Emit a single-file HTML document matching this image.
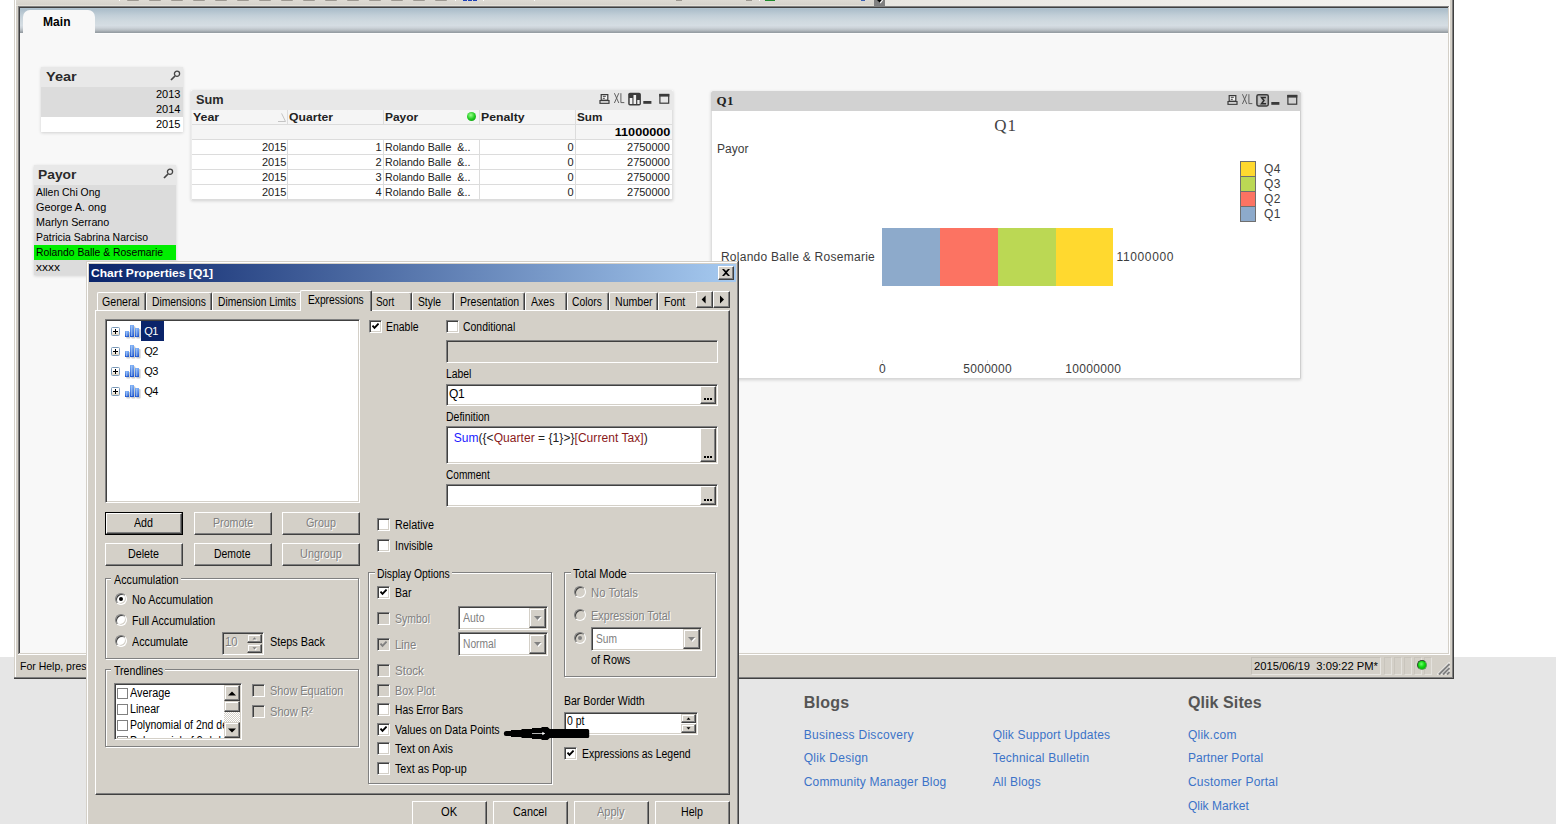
<!DOCTYPE html><html><head><meta charset="utf-8"><title>QlikView</title><style>html,body{margin:0;padding:0}
body{width:1556px;height:824px;overflow:hidden;position:relative;background:#e6e6e6;font-family:"Liberation Sans",sans-serif;font-size:11px}
div,span.t,svg{position:absolute;box-sizing:border-box}
span.t{white-space:pre;display:block}
.sunk{border:1px solid;border-color:#808080 #fff #fff #808080;box-shadow:inset 1px 1px 0 #404040,inset -1px -1px 0 #d4d0c8;background:#fff}
.btn{border:1px solid;border-color:#fff #404040 #404040 #fff;box-shadow:inset -1px -1px 0 #808080,inset 1px 1px 0 #d4d0c8;background:#d4d0c8}
.grp{border:1px solid #808080;box-shadow:1px 1px 0 #fff,inset 1px 1px 0 #fff}
.rad{border-radius:50%;border:1px solid;border-color:#808080 #fff #fff #808080;box-shadow:inset 1px 1px 0 #404040,inset -1px -1px 0 #d4d0c8;background:#fff;transform:rotate(0deg)}
.tab{border-left:1px solid #fff;border-top:1px solid #fff;border-right:1px solid #404040;border-radius:2px 2px 0 0;box-shadow:inset -1px 0 0 #808080;background:#d4d0c8}
.sh{box-shadow:0 1px 3px rgba(0,0,0,.16)}
.sbtn{border:1px solid;border-color:#d4d0c8 #404040 #404040 #d4d0c8;box-shadow:inset -1px -1px 0 #808080,inset 1px 1px 0 #fff;background:#d4d0c8}
</style></head><body><div style="left:0px;top:0px;width:1556px;height:657px;background:#fff"></div><span class="t" style="top:693px;font-size:16px;line-height:20px;color:#555;font-weight:bold;left:803.70px;letter-spacing:0.24px;">Blogs</span><span class="t" style="top:693px;font-size:16px;line-height:20px;color:#555;font-weight:bold;left:1187.90px;letter-spacing:0.10px;">Qlik Sites</span><span class="t" style="top:727px;font-size:12px;line-height:16px;color:#3b73c8;left:803.70px;letter-spacing:0.30px;">Business Discovery</span><span class="t" style="top:750px;font-size:12px;line-height:16px;color:#3b73c8;left:803.70px;letter-spacing:0.30px;">Qlik Design</span><span class="t" style="top:774px;font-size:12px;line-height:16px;color:#3b73c8;left:803.70px;letter-spacing:0.18px;">Community Manager Blog</span><span class="t" style="top:727px;font-size:12px;line-height:16px;color:#3b73c8;left:992.70px;letter-spacing:0.17px;">Qlik Support Updates</span><span class="t" style="top:750px;font-size:12px;line-height:16px;color:#3b73c8;left:992.70px;letter-spacing:0.22px;">Technical Bulletin</span><span class="t" style="top:774px;font-size:12px;line-height:16px;color:#3b73c8;left:992.70px;letter-spacing:0.16px;">All Blogs</span><span class="t" style="top:727px;font-size:12px;line-height:16px;color:#3b73c8;left:1187.90px;letter-spacing:0.26px;">Qlik.com</span><span class="t" style="top:750px;font-size:12px;line-height:16px;color:#3b73c8;left:1187.90px;letter-spacing:0.09px;">Partner Portal</span><span class="t" style="top:774px;font-size:12px;line-height:16px;color:#3b73c8;left:1187.90px;letter-spacing:0.24px;">Customer Portal</span><span class="t" style="top:798px;font-size:12px;line-height:16px;color:#3b73c8;left:1187.90px;letter-spacing:0.02px;">Qlik Market</span><div style="left:14px;top:0px;width:1440px;height:679px;background:#d4d0c8"></div><div style="left:15px;top:0px;width:1px;height:677px;background:#fff"></div><div style="left:1452px;top:0px;width:1px;height:678px;background:#808080"></div><div style="left:1453px;top:0px;width:1px;height:679px;background:#404040"></div><div style="left:14px;top:677px;width:1439px;height:1px;background:#808080"></div><div style="left:14px;top:678px;width:1440px;height:1px;background:#404040"></div><div style="left:16px;top:0px;width:868px;height:6px;background:linear-gradient(#dddad3,#d6d3cc 80%,#e4e1d9 84%)"></div><div style="left:884px;top:0px;width:566px;height:6px;background:linear-gradient(90deg,#e8e6e1,#f4f3f0)"></div><div style="left:16px;top:0px;width:864px;height:1px;"><div style="left:111px;top:0;width:12px;height:1px;background:#9d9992;border-radius:0 0 2px 2px"></div><div style="left:133px;top:0;width:12px;height:1px;background:#9d9992;border-radius:0 0 2px 2px"></div><div style="left:155px;top:0;width:12px;height:1px;background:#9d9992;border-radius:0 0 2px 2px"></div><div style="left:177px;top:0;width:12px;height:1px;background:#9d9992;border-radius:0 0 2px 2px"></div><div style="left:199px;top:0;width:12px;height:1px;background:#9d9992;border-radius:0 0 2px 2px"></div><div style="left:221px;top:0;width:12px;height:1px;background:#9d9992;border-radius:0 0 2px 2px"></div><div style="left:243px;top:0;width:12px;height:1px;background:#9d9992;border-radius:0 0 2px 2px"></div><div style="left:265px;top:0;width:12px;height:1px;background:#9d9992;border-radius:0 0 2px 2px"></div><div style="left:287px;top:0;width:12px;height:1px;background:#9d9992;border-radius:0 0 2px 2px"></div><div style="left:309px;top:0;width:12px;height:1px;background:#9d9992;border-radius:0 0 2px 2px"></div><div style="left:331px;top:0;width:12px;height:1px;background:#9d9992;border-radius:0 0 2px 2px"></div><div style="left:353px;top:0;width:12px;height:1px;background:#9d9992;border-radius:0 0 2px 2px"></div><div style="left:375px;top:0;width:12px;height:1px;background:#9d9992;border-radius:0 0 2px 2px"></div><div style="left:397px;top:0;width:12px;height:1px;background:#9d9992;border-radius:0 0 2px 2px"></div><div style="left:419px;top:0;width:12px;height:1px;background:#9d9992;border-radius:0 0 2px 2px"></div></div><div style="left:119px;top:0px;width:1px;height:1px;background:#fff"></div><div style="left:455px;top:0px;width:1px;height:1px;background:#fff"></div><div style="left:483px;top:0px;width:1px;height:1px;background:#fff"></div><div style="left:534px;top:0px;width:1px;height:1px;background:#fff"></div><div style="left:759px;top:0px;width:1px;height:1px;background:#fff"></div><div style="left:463px;top:0px;width:4px;height:1px;background:#1c3fb4"></div><div style="left:468px;top:0px;width:4px;height:1px;background:#1c3fb4"></div><div style="left:473px;top:0px;width:4px;height:1px;background:#1c3fb4"></div><div style="left:676px;top:0px;width:6px;height:1px;background:#9d9992"></div><div style="left:746px;top:0px;width:6px;height:1px;background:#9d9992"></div><div style="left:765px;top:0px;width:10px;height:1px;background:#1f8a2b"></div><div style="left:861px;top:0px;width:4px;height:1px;background:#3b5fb0"></div><div style="left:874px;top:0px;width:11px;height:6px;background:#808080"></div><svg style="left:876px;top:0px" width="8" height="4" viewBox="0 0 8 4"><path d="M1 0h5L3.6 2.6z" fill="#000"/><path d="M6.6 0L4.2 3.2" stroke="#fff" stroke-width="1.1"/></svg><div style="left:18px;top:6px;width:1432px;height:1px;background:#808080"></div><div style="left:18px;top:7px;width:1431px;height:1px;background:#404040"></div><div style="left:18px;top:6px;width:1px;height:649px;background:#808080"></div><div style="left:19px;top:7px;width:1px;height:647px;background:#404040"></div><div style="left:1449px;top:6px;width:1px;height:649px;background:#fff"></div><div style="left:1448px;top:7px;width:1px;height:647px;background:#d4d0c8"></div><div style="left:19px;top:653px;width:1430px;height:1px;background:#d4d0c8"></div><div style="left:18px;top:654px;width:1432px;height:1px;background:#fff"></div><div style="left:20px;top:8px;width:1428px;height:25px;background:linear-gradient(#b0c3d0 0%,#adbfcb 6%,#c2cfd8 30%,#cfd9df 52%,#d5dde3 70%,#ccd3d9 79%,#b6bdc2 89%,#989fa5 97%,#959da2 100%)"></div><div style="left:23px;top:10px;width:72px;height:24px;background:#f8f8f8;border-radius:7px 7px 0 0"></div><span class="t" style="top:14px;font-size:12px;line-height:16px;color:#000;font-weight:bold;left:43.00px;letter-spacing:0.05px;">Main</span><div style="left:20px;top:33px;width:1428px;height:620px;background:#f8f8f8"></div><div style="left:95px;top:33px;width:1353px;height:1px;background:#fdfdfd"></div><span class="t" style="top:659px;font-size:11px;line-height:15px;color:#000;left:20.00px;transform-origin:0 0;transform:scaleX(0.9551);">For Help, press F1</span><div style="left:1251px;top:657px;width:130px;height:18px;border:1px solid;border-color:#c4c0b8 #e8e6e2 #e8e6e2 #c4c0b8"></div><span class="t" style="top:659px;font-size:11px;line-height:15px;color:#000;left:1253.50px;transform-origin:0 0;transform:scaleX(1.0187);">2015/06/19  3:09:22 PM*</span><div style="left:1384px;top:657px;width:8px;height:18px;border:1px solid;border-color:#c9c5bd #e4e2dd #e4e2dd #c9c5bd"></div><div style="left:1394px;top:657px;width:8px;height:18px;border:1px solid;border-color:#c9c5bd #e4e2dd #e4e2dd #c9c5bd"></div><div style="left:1404px;top:657px;width:8px;height:18px;border:1px solid;border-color:#c9c5bd #e4e2dd #e4e2dd #c9c5bd"></div><div style="left:1414px;top:657px;width:8px;height:18px;border:1px solid;border-color:#c9c5bd #e4e2dd #e4e2dd #c9c5bd"></div><div style="left:1424px;top:657px;width:8px;height:18px;border:1px solid;border-color:#c9c5bd #e4e2dd #e4e2dd #c9c5bd"></div><div style="left:1417px;top:660px;width:10px;height:10px;border-radius:50%;background:radial-gradient(circle at 42% 38%,#6dff6d 0%,#10d810 45%,#0a9a0a 100%);border:1px solid;border-color:#2a4a2a #5a9a5a #5a9a5a #2a4a2a"></div><svg style="left:1437px;top:662px" width="13" height="13" viewBox="0 0 13 13"><path d="M12.5 0.5L0.5 12.5M12.5 4.5L4.5 12.5M12.5 8.5L8.5 12.5" stroke="#fff" stroke-width="1.1"/><path d="M12.5 1.9L1.9 12.5M12.5 5.9L5.9 12.5M12.5 9.9L9.9 12.5" stroke="#808080" stroke-width="2"/></svg><div class="sh" style="left:41px;top:67px;width:142px;height:65px;background:#fff"></div><div style="left:41px;top:67px;width:142px;height:20px;background:#e8e8e8"></div><div style="left:41px;top:87px;width:142px;height:30px;background:#dcdcdc"></div><div style="left:41px;top:117px;width:142px;height:15px;background:#fff"></div><span class="t" style="top:69px;font-size:12.5px;line-height:16px;color:#2a2a2a;font-weight:bold;left:45.70px;transform-origin:0 0;transform:scaleX(1.1619);">Year</span><svg style="left:170px;top:70px" width="11" height="11" viewBox="0 0 11 11"><circle cx="7" cy="3.8" r="2.6" fill="none" stroke="#444" stroke-width="1.3"/><path d="M5 6L1 10" stroke="#444" stroke-width="1.7"/></svg><span class="t" style="top:87px;font-size:11px;line-height:15px;color:#000;text-align:right;right:1375.10px;transform-origin:100% 0;transform:scaleX(1.0006);">2013</span><span class="t" style="top:102px;font-size:11px;line-height:15px;color:#000;text-align:right;right:1375.10px;transform-origin:100% 0;transform:scaleX(1.0006);">2014</span><span class="t" style="top:117px;font-size:11px;line-height:15px;color:#000;text-align:right;right:1375.10px;transform-origin:100% 0;transform:scaleX(1.0006);">2015</span><div class="sh" style="left:34px;top:165px;width:142px;height:110px;background:#dcdcdc"></div><div style="left:34px;top:165px;width:142px;height:20px;background:#e8e8e8"></div><div style="left:34px;top:245px;width:142px;height:15px;background:#00ee00"></div><span class="t" style="top:167px;font-size:12.5px;line-height:16px;color:#2a2a2a;font-weight:bold;left:38.10px;transform-origin:0 0;transform:scaleX(1.1050);">Payor</span><svg style="left:163px;top:168px" width="11" height="11" viewBox="0 0 11 11"><circle cx="7" cy="3.8" r="2.6" fill="none" stroke="#444" stroke-width="1.3"/><path d="M5 6L1 10" stroke="#444" stroke-width="1.7"/></svg><span class="t" style="top:185px;font-size:11px;line-height:15px;color:#000;left:35.50px;transform-origin:0 0;transform:scaleX(0.9473);">Allen Chi Ong</span><span class="t" style="top:200px;font-size:11px;line-height:15px;color:#000;left:35.50px;transform-origin:0 0;transform:scaleX(0.9894);">George A. ong</span><span class="t" style="top:215px;font-size:11px;line-height:15px;color:#000;left:35.50px;transform-origin:0 0;transform:scaleX(0.9747);">Marlyn Serrano</span><span class="t" style="top:230px;font-size:11px;line-height:15px;color:#000;left:35.50px;transform-origin:0 0;transform:scaleX(0.9492);">Patricia Sabrina Narciso</span><span class="t" style="top:245px;font-size:11px;line-height:15px;color:#000;left:35.50px;transform-origin:0 0;transform:scaleX(0.9398);">Rolando Balle &amp; Rosemarie</span><span class="t" style="top:260px;font-size:11px;line-height:15px;color:#000;left:35.50px;transform-origin:0 0;transform:scaleX(1.0909);">xxxx</span><div class="sh" style="left:191px;top:90px;width:482px;height:110px;background:#fff"></div><div style="left:191px;top:90px;width:482px;height:20px;background:#e8e8e8;border-radius:2px 2px 0 0"></div><div style="left:191px;top:110px;width:482px;height:30px;background:#f5f5f5"></div><div style="left:191px;top:124px;width:482px;height:1px;background:#dcdcdc"></div><div style="left:191px;top:139px;width:482px;height:1px;background:#dcdcdc"></div><div style="left:191px;top:154px;width:482px;height:1px;background:#dcdcdc"></div><div style="left:191px;top:169px;width:482px;height:1px;background:#dcdcdc"></div><div style="left:191px;top:184px;width:482px;height:1px;background:#dcdcdc"></div><div style="left:191px;top:199px;width:482px;height:1px;background:#dcdcdc"></div><div style="left:287px;top:110px;width:1px;height:14px;background:#dcdcdc"></div><div style="left:287px;top:140px;width:1px;height:60px;background:#dcdcdc"></div><div style="left:383px;top:110px;width:1px;height:14px;background:#dcdcdc"></div><div style="left:383px;top:140px;width:1px;height:60px;background:#dcdcdc"></div><div style="left:479px;top:110px;width:1px;height:14px;background:#dcdcdc"></div><div style="left:479px;top:140px;width:1px;height:60px;background:#dcdcdc"></div><div style="left:575px;top:110px;width:1px;height:14px;background:#dcdcdc"></div><div style="left:575px;top:140px;width:1px;height:60px;background:#dcdcdc"></div><div style="left:575px;top:125px;width:1px;height:14px;background:#dcdcdc"></div><div style="left:191px;top:110px;width:1px;height:90px;background:#ececec"></div><div style="left:672px;top:110px;width:1px;height:90px;background:#e0e0e0"></div><span class="t" style="top:92px;font-size:12.5px;line-height:16px;color:#2a2a2a;font-weight:bold;left:196.10px;transform-origin:0 0;transform:scaleX(1.0187);">Sum</span><svg style="left:598.6px;top:92px" width="72" height="15" viewBox="0 0 72 15"><g fill="#f4f4f4" stroke="#3a3a3a" stroke-width="1.2"><rect x="2.2" y="2.6" width="6.6" height="5.6"/><rect x="1" y="8.6" width="9" height="2.7"/></g><path d="M3.8 4.3h3M3.8 6.3h2" stroke="#3a3a3a" stroke-width="1"/><g fill="none" stroke="#5a5a5a" stroke-width="0.95"><path d="M15.4 1.2l4.4 9.8M19.8 1.2L15.4 11M21.9 1.2v9.4h3.4"/></g><rect x="29.2" y="0.8" width="12.7" height="12.8" rx="1.8" fill="#3c3c3c"/><path d="M30.7 12V6h2.7V12zM34.5 12V2.9h2.6V12zM38.3 12V8h2.3V12z" fill="#f0f0f0"/><rect x="44.3" y="9" width="8.1" height="2.8" fill="#3a3a3a"/><rect x="60.9" y="2.5" width="8.8" height="8.7" fill="none" stroke="#3a3a3a" stroke-width="1.2"/><rect x="60.3" y="1.9" width="10" height="2.7" fill="#3a3a3a"/></svg><span class="t" style="top:110px;font-size:11px;line-height:15px;color:#222;font-weight:bold;left:193.30px;transform-origin:0 0;transform:scaleX(1.1269);">Year</span><span class="t" style="top:110px;font-size:11px;line-height:15px;color:#222;font-weight:bold;left:289.30px;transform-origin:0 0;transform:scaleX(1.1069);">Quarter</span><span class="t" style="top:110px;font-size:11px;line-height:15px;color:#222;font-weight:bold;left:385.30px;transform-origin:0 0;transform:scaleX(1.0857);">Payor</span><span class="t" style="top:110px;font-size:11px;line-height:15px;color:#222;font-weight:bold;left:480.90px;transform-origin:0 0;transform:scaleX(1.1139);">Penalty</span><span class="t" style="top:110px;font-size:11px;line-height:15px;color:#222;font-weight:bold;left:577.30px;transform-origin:0 0;transform:scaleX(1.0653);">Sum</span><svg style="left:277px;top:112px" width="10" height="11" viewBox="0 0 10 11"><path d="M1 9.5h7.5L4.6 1.4" fill="none" stroke="#c4c4c4" stroke-width="1"/></svg><div style="left:467px;top:112px;width:9px;height:9px;border-radius:50%;background:radial-gradient(circle at 42% 35%,#9dff8d 0%,#22cc22 50%,#0a8a0a 100%)"></div><span class="t" style="top:125px;font-size:11px;line-height:15px;color:#000;font-weight:bold;text-align:right;right:885.90px;transform-origin:100% 0;transform:scaleX(1.1501);">11000000</span><span class="t" style="top:140px;font-size:11px;line-height:15px;color:#222;text-align:right;right:1269.90px;transform-origin:100% 0;transform:scaleX(1.0006);">2015</span><span class="t" style="top:140px;font-size:11px;line-height:15px;color:#222;text-align:right;right:1174.50px;">1</span><span class="t" style="top:140px;font-size:11px;line-height:15px;color:#222;left:385.30px;transform-origin:0 0;transform:scaleX(0.9698);">Rolando Balle  &amp;..</span><span class="t" style="top:140px;font-size:11px;line-height:15px;color:#222;text-align:right;right:982.30px;">0</span><span class="t" style="top:140px;font-size:11px;line-height:15px;color:#222;text-align:right;right:885.90px;transform-origin:100% 0;transform:scaleX(0.9993);">2750000</span><span class="t" style="top:155px;font-size:11px;line-height:15px;color:#222;text-align:right;right:1269.90px;transform-origin:100% 0;transform:scaleX(1.0006);">2015</span><span class="t" style="top:155px;font-size:11px;line-height:15px;color:#222;text-align:right;right:1174.50px;">2</span><span class="t" style="top:155px;font-size:11px;line-height:15px;color:#222;left:385.30px;transform-origin:0 0;transform:scaleX(0.9698);">Rolando Balle  &amp;..</span><span class="t" style="top:155px;font-size:11px;line-height:15px;color:#222;text-align:right;right:982.30px;">0</span><span class="t" style="top:155px;font-size:11px;line-height:15px;color:#222;text-align:right;right:885.90px;transform-origin:100% 0;transform:scaleX(0.9993);">2750000</span><span class="t" style="top:170px;font-size:11px;line-height:15px;color:#222;text-align:right;right:1269.90px;transform-origin:100% 0;transform:scaleX(1.0006);">2015</span><span class="t" style="top:170px;font-size:11px;line-height:15px;color:#222;text-align:right;right:1174.50px;">3</span><span class="t" style="top:170px;font-size:11px;line-height:15px;color:#222;left:385.30px;transform-origin:0 0;transform:scaleX(0.9698);">Rolando Balle  &amp;..</span><span class="t" style="top:170px;font-size:11px;line-height:15px;color:#222;text-align:right;right:982.30px;">0</span><span class="t" style="top:170px;font-size:11px;line-height:15px;color:#222;text-align:right;right:885.90px;transform-origin:100% 0;transform:scaleX(0.9993);">2750000</span><span class="t" style="top:185px;font-size:11px;line-height:15px;color:#222;text-align:right;right:1269.90px;transform-origin:100% 0;transform:scaleX(1.0006);">2015</span><span class="t" style="top:185px;font-size:11px;line-height:15px;color:#222;text-align:right;right:1174.50px;">4</span><span class="t" style="top:185px;font-size:11px;line-height:15px;color:#222;left:385.30px;transform-origin:0 0;transform:scaleX(0.9698);">Rolando Balle  &amp;..</span><span class="t" style="top:185px;font-size:11px;line-height:15px;color:#222;text-align:right;right:982.30px;">0</span><span class="t" style="top:185px;font-size:11px;line-height:15px;color:#222;text-align:right;right:885.90px;transform-origin:100% 0;transform:scaleX(0.9993);">2750000</span><div class="sh" style="left:711px;top:91px;width:590px;height:288px;background:#fff"></div><div style="left:711px;top:91px;width:590px;height:20px;background:#d2d2d2;border-radius:2px 3px 0 0"></div><div style="left:711px;top:111px;width:1px;height:268px;background:#dedede"></div><div style="left:1300px;top:111px;width:1px;height:268px;background:#cfcfcf"></div><div style="left:711px;top:378px;width:590px;height:1px;background:#d8d8d8"></div><span class="t" style="top:92px;font-size:13px;line-height:17px;color:#222;font-family:'Liberation Serif',serif;font-weight:bold;left:716.50px;letter-spacing:0.38px;">Q1</span><svg style="left:1226.6px;top:93px" width="72" height="15" viewBox="0 0 72 15"><g fill="#f4f4f4" stroke="#3a3a3a" stroke-width="1.2"><rect x="2.2" y="2.6" width="6.6" height="5.6"/><rect x="1" y="8.6" width="9" height="2.7"/></g><path d="M3.8 4.3h3M3.8 6.3h2" stroke="#3a3a3a" stroke-width="1"/><g fill="none" stroke="#5a5a5a" stroke-width="0.95"><path d="M15.4 1.2l4.4 9.8M19.8 1.2L15.4 11M21.9 1.2v9.4h3.4"/></g><rect x="29.9" y="1.7" width="11.4" height="11.2" rx="1.6" fill="#b8b8b8" stroke="#3c3c3c" stroke-width="1.5"/><path d="M38.9 4.4h-4.4l2.5 3.1-2.5 3.3h4.6" fill="none" stroke="#2a2a2a" stroke-width="1.5"/><path d="M31.4 5h2.2M31.4 7h2.2M31.4 9h2.2" stroke="#dedede" stroke-width="0.8"/><rect x="44.3" y="9" width="8.1" height="2.8" fill="#3a3a3a"/><rect x="60.9" y="2.5" width="8.8" height="8.7" fill="none" stroke="#3a3a3a" stroke-width="1.2"/><rect x="60.3" y="1.9" width="10" height="2.7" fill="#3a3a3a"/></svg><span class="t" style="top:115px;font-size:17px;line-height:21px;color:#444;font-family:'Liberation Serif',serif;left:994.30px;letter-spacing:0.92px;">Q1</span><span class="t" style="top:141px;font-size:12px;line-height:16px;color:#3c3c3c;left:717.00px;letter-spacing:0.04px;">Payor</span><span class="t" style="top:249px;font-size:12px;line-height:16px;color:#3c3c3c;left:720.90px;letter-spacing:0.27px;">Rolando Balle &amp; Rosemarie</span><div style="left:882px;top:228px;width:58px;height:58px;background:#8daacb"></div><div style="left:940px;top:228px;width:58px;height:58px;background:#fc7362"></div><div style="left:998px;top:228px;width:58px;height:58px;background:#bbd854"></div><div style="left:1056px;top:228px;width:57px;height:58px;background:#ffd92f"></div><span class="t" style="top:249px;font-size:12px;line-height:16px;color:#3c3c3c;left:1116.50px;letter-spacing:0.63px;">11000000</span><div style="left:882px;top:360px;width:1px;height:3px;background:#d9d9d9"></div><div style="left:987px;top:360px;width:1px;height:3px;background:#d9d9d9"></div><div style="left:1092px;top:360px;width:1px;height:3px;background:#d9d9d9"></div><span class="t" style="top:361px;font-size:12px;line-height:16px;color:#3c3c3c;left:879.10px;">0</span><span class="t" style="top:361px;font-size:12px;line-height:16px;color:#3c3c3c;left:963.30px;letter-spacing:0.28px;">5000000</span><span class="t" style="top:361px;font-size:12px;line-height:16px;color:#3c3c3c;left:1065.20px;letter-spacing:0.33px;">10000000</span><div style="left:1240px;top:161px;width:16px;height:16px;background:#ffd92f;border:1px solid #6f6f6f"></div><span class="t" style="top:161px;font-size:12px;line-height:16px;color:#3c3c3c;left:1264.10px;letter-spacing:0.38px;">Q4</span><div style="left:1240px;top:176px;width:16px;height:16px;background:#bbd854;border:1px solid #6f6f6f"></div><span class="t" style="top:176px;font-size:12px;line-height:16px;color:#3c3c3c;left:1264.10px;letter-spacing:0.38px;">Q3</span><div style="left:1240px;top:191px;width:16px;height:16px;background:#fc7362;border:1px solid #6f6f6f"></div><span class="t" style="top:191px;font-size:12px;line-height:16px;color:#3c3c3c;left:1264.10px;letter-spacing:0.38px;">Q2</span><div style="left:1240px;top:206px;width:16px;height:16px;background:#8daacb;border:1px solid #6f6f6f"></div><span class="t" style="top:206px;font-size:12px;line-height:16px;color:#3c3c3c;left:1264.10px;letter-spacing:0.38px;">Q1</span><div style="left:86px;top:261px;width:653px;height:569px;background:#404040"></div><div style="left:86px;top:261px;width:652px;height:568px;background:#d4d0c8"></div><div style="left:87px;top:262px;width:651px;height:567px;background:#808080"></div><div style="left:87px;top:262px;width:650px;height:566px;background:#fff"></div><div style="left:88px;top:263px;width:649px;height:565px;background:#d4d0c8"></div><div style="left:89px;top:264px;width:647px;height:18px;background:linear-gradient(90deg,#0a246a,#a6caf0)"></div><span class="t" style="top:266px;font-size:11px;line-height:15px;color:#fff;font-weight:bold;left:90.50px;transform-origin:0 0;transform:scaleX(1.0966);">Chart Properties [Q1]</span><div class="btn" style="left:718px;top:266px;width:16px;height:14px;"></div><svg style="left:722px;top:269px" width="8" height="7" viewBox="0 0 8 7"><path d="M0 0h2l2 2 2-2h2L5 3.5 8 7H6L4 5 2 7H0L3 3.5z" fill="#000"/></svg><div style="left:95px;top:310px;width:635px;height:485px;border:1px solid;border-color:#fff #404040 #404040 #fff;box-shadow:inset -1px -1px 0 #808080"></div><div class="tab" style="left:97px;top:292px;width:49px;height:18px;"></div><span class="t" style="top:294px;font-size:12px;line-height:16px;color:#000;left:102.00px;transform-origin:0 0;transform:scaleX(0.8828);">General</span><div class="tab" style="left:146px;top:292px;width:66px;height:18px;"></div><span class="t" style="top:294px;font-size:12px;line-height:16px;color:#000;left:152.10px;transform-origin:0 0;transform:scaleX(0.8612);">Dimensions</span><div class="tab" style="left:212px;top:292px;width:90px;height:18px;"></div><span class="t" style="top:294px;font-size:12px;line-height:16px;color:#000;left:217.80px;transform-origin:0 0;transform:scaleX(0.8538);">Dimension Limits</span><div class="tab" style="left:371px;top:292px;width:41px;height:18px;"></div><span class="t" style="top:294px;font-size:12px;line-height:16px;color:#000;left:376.00px;transform-origin:0 0;transform:scaleX(0.8267);">Sort</span><div class="tab" style="left:412px;top:292px;width:42px;height:18px;"></div><span class="t" style="top:294px;font-size:12px;line-height:16px;color:#000;left:417.60px;transform-origin:0 0;transform:scaleX(0.8581);">Style</span><div class="tab" style="left:454px;top:292px;width:71px;height:18px;"></div><span class="t" style="top:294px;font-size:12px;line-height:16px;color:#000;left:459.50px;transform-origin:0 0;transform:scaleX(0.8785);">Presentation</span><div class="tab" style="left:525px;top:292px;width:42px;height:18px;"></div><span class="t" style="top:294px;font-size:12px;line-height:16px;color:#000;left:530.50px;transform-origin:0 0;transform:scaleX(0.8768);">Axes</span><div class="tab" style="left:567px;top:292px;width:42px;height:18px;"></div><span class="t" style="top:294px;font-size:12px;line-height:16px;color:#000;left:572.00px;transform-origin:0 0;transform:scaleX(0.8591);">Colors</span><div class="tab" style="left:609px;top:292px;width:49px;height:18px;"></div><span class="t" style="top:294px;font-size:12px;line-height:16px;color:#000;left:614.70px;transform-origin:0 0;transform:scaleX(0.8808);">Number</span><div class="tab" style="left:658px;top:292px;width:42px;height:18px;"></div><span class="t" style="top:294px;font-size:12px;line-height:16px;color:#000;left:663.50px;transform-origin:0 0;transform:scaleX(0.8869);">Font</span><div class="tab" style="left:300px;top:290px;width:72px;height:21px;"></div><span class="t" style="top:292px;font-size:12px;line-height:16px;color:#000;left:308.00px;transform-origin:0 0;transform:scaleX(0.8520);">Expressions</span><div style="left:696px;top:290px;width:34px;height:20px;background:#d4d0c8"></div><div class="btn" style="left:696px;top:291px;width:17px;height:17px;"></div><div class="btn" style="left:713px;top:291px;width:17px;height:17px;"></div><svg style="left:701px;top:295px" width="6" height="9" viewBox="0 0 6 9"><path d="M4.6 0.5v8L0.6 4.5z" fill="#000"/></svg><svg style="left:719px;top:295px" width="6" height="9" viewBox="0 0 6 9"><path d="M1 0.5v8L5 4.5z" fill="#000"/></svg><div class="sunk" style="left:105px;top:319px;width:255px;height:184px;"></div><div style="left:111px;top:327px;width:9px;height:9px;border:1px solid #7b9ab8;border-radius:1.5px;background:linear-gradient(#fff 40%,#ddd3c0)"></div><div style="left:113px;top:331px;width:5px;height:1px;background:#000"></div><div style="left:115px;top:329px;width:1px;height:5px;background:#000"></div><svg style="left:125px;top:325px" width="18" height="15" viewBox="0 0 18 15"><defs><linearGradient id="bg" x1="0" y1="0" x2="0" y2="1"><stop offset="0" stop-color="#7fb0f6"/><stop offset="1" stop-color="#1d54cc"/></linearGradient></defs><g fill="#8a8f99" opacity=".45"><rect x="1.2" y="7" width="4.2" height="6.6" rx="1"/><rect x="6.2" y="1.2" width="4.2" height="12.4" rx="1"/><rect x="11.2" y="4" width="4.4" height="9.6" rx="1"/></g><g fill="url(#bg)"><rect x="0" y="6" width="4" height="6"/><rect x="5" y="0" width="4" height="12"/><rect x="10" y="3" width="4" height="9"/></g><g fill="#a9cbfb" opacity=".7"><rect x="1" y="6.6" width="1.4" height="4.6"/><rect x="6" y="0.6" width="1.4" height="10.4"/><rect x="11" y="3.6" width="1.4" height="7.6"/></g></svg><div style="left:141px;top:321px;width:23px;height:20px;background:#0a246a"></div><span class="t" style="top:324px;font-size:11px;line-height:15px;color:#fff;left:144.30px;letter-spacing:-0.49px;">Q1</span><div style="left:111px;top:347px;width:9px;height:9px;border:1px solid #7b9ab8;border-radius:1.5px;background:linear-gradient(#fff 40%,#ddd3c0)"></div><div style="left:113px;top:351px;width:5px;height:1px;background:#000"></div><div style="left:115px;top:349px;width:1px;height:5px;background:#000"></div><svg style="left:125px;top:345px" width="18" height="15" viewBox="0 0 18 15"><defs><linearGradient id="bg" x1="0" y1="0" x2="0" y2="1"><stop offset="0" stop-color="#7fb0f6"/><stop offset="1" stop-color="#1d54cc"/></linearGradient></defs><g fill="#8a8f99" opacity=".45"><rect x="1.2" y="7" width="4.2" height="6.6" rx="1"/><rect x="6.2" y="1.2" width="4.2" height="12.4" rx="1"/><rect x="11.2" y="4" width="4.4" height="9.6" rx="1"/></g><g fill="url(#bg)"><rect x="0" y="6" width="4" height="6"/><rect x="5" y="0" width="4" height="12"/><rect x="10" y="3" width="4" height="9"/></g><g fill="#a9cbfb" opacity=".7"><rect x="1" y="6.6" width="1.4" height="4.6"/><rect x="6" y="0.6" width="1.4" height="10.4"/><rect x="11" y="3.6" width="1.4" height="7.6"/></g></svg><span class="t" style="top:344px;font-size:11px;line-height:15px;color:#000;left:144.30px;letter-spacing:-0.49px;">Q2</span><div style="left:111px;top:367px;width:9px;height:9px;border:1px solid #7b9ab8;border-radius:1.5px;background:linear-gradient(#fff 40%,#ddd3c0)"></div><div style="left:113px;top:371px;width:5px;height:1px;background:#000"></div><div style="left:115px;top:369px;width:1px;height:5px;background:#000"></div><svg style="left:125px;top:365px" width="18" height="15" viewBox="0 0 18 15"><defs><linearGradient id="bg" x1="0" y1="0" x2="0" y2="1"><stop offset="0" stop-color="#7fb0f6"/><stop offset="1" stop-color="#1d54cc"/></linearGradient></defs><g fill="#8a8f99" opacity=".45"><rect x="1.2" y="7" width="4.2" height="6.6" rx="1"/><rect x="6.2" y="1.2" width="4.2" height="12.4" rx="1"/><rect x="11.2" y="4" width="4.4" height="9.6" rx="1"/></g><g fill="url(#bg)"><rect x="0" y="6" width="4" height="6"/><rect x="5" y="0" width="4" height="12"/><rect x="10" y="3" width="4" height="9"/></g><g fill="#a9cbfb" opacity=".7"><rect x="1" y="6.6" width="1.4" height="4.6"/><rect x="6" y="0.6" width="1.4" height="10.4"/><rect x="11" y="3.6" width="1.4" height="7.6"/></g></svg><span class="t" style="top:364px;font-size:11px;line-height:15px;color:#000;left:144.30px;letter-spacing:-0.49px;">Q3</span><div style="left:111px;top:387px;width:9px;height:9px;border:1px solid #7b9ab8;border-radius:1.5px;background:linear-gradient(#fff 40%,#ddd3c0)"></div><div style="left:113px;top:391px;width:5px;height:1px;background:#000"></div><div style="left:115px;top:389px;width:1px;height:5px;background:#000"></div><svg style="left:125px;top:385px" width="18" height="15" viewBox="0 0 18 15"><defs><linearGradient id="bg" x1="0" y1="0" x2="0" y2="1"><stop offset="0" stop-color="#7fb0f6"/><stop offset="1" stop-color="#1d54cc"/></linearGradient></defs><g fill="#8a8f99" opacity=".45"><rect x="1.2" y="7" width="4.2" height="6.6" rx="1"/><rect x="6.2" y="1.2" width="4.2" height="12.4" rx="1"/><rect x="11.2" y="4" width="4.4" height="9.6" rx="1"/></g><g fill="url(#bg)"><rect x="0" y="6" width="4" height="6"/><rect x="5" y="0" width="4" height="12"/><rect x="10" y="3" width="4" height="9"/></g><g fill="#a9cbfb" opacity=".7"><rect x="1" y="6.6" width="1.4" height="4.6"/><rect x="6" y="0.6" width="1.4" height="10.4"/><rect x="11" y="3.6" width="1.4" height="7.6"/></g></svg><span class="t" style="top:384px;font-size:11px;line-height:15px;color:#000;left:144.30px;letter-spacing:-0.49px;">Q4</span><div class="sunk" style="left:369px;top:320px;width:13px;height:13px;background:#fff"></div><svg style="left:372px;top:323px" width="7" height="7" viewBox="0 0 7 7"><path d="M0.5 2.6L2.5 4.8L6.6 0.6" stroke="#000" stroke-width="1.9" fill="none"/></svg><span class="t" style="top:319px;font-size:12px;line-height:16px;color:#000;left:385.90px;transform-origin:0 0;transform:scaleX(0.8722);">Enable</span><div class="sunk" style="left:446px;top:320px;width:13px;height:13px;background:#fff"></div><span class="t" style="top:319px;font-size:12px;line-height:16px;color:#000;left:463.30px;transform-origin:0 0;transform:scaleX(0.8693);">Conditional</span><div class="sunk" style="left:446px;top:340px;width:272px;height:23px;background:#d4d0c8"></div><span class="t" style="top:366px;font-size:12px;line-height:16px;color:#000;left:446.10px;transform-origin:0 0;transform:scaleX(0.8647);">Label</span><div class="sunk" style="left:446px;top:384px;width:272px;height:22px;"></div><span class="t" style="top:386px;font-size:12px;line-height:16px;color:#000;left:449.10px;letter-spacing:-0.52px;">Q1</span><span class="t" style="top:409px;font-size:12px;line-height:16px;color:#000;left:446.10px;transform-origin:0 0;transform:scaleX(0.8735);">Definition</span><div class="sunk" style="left:446px;top:426px;width:272px;height:38px;"></div><span class="t" style="top:467px;font-size:12px;line-height:16px;color:#000;left:446.10px;transform-origin:0 0;transform:scaleX(0.8401);">Comment</span><div class="sunk" style="left:446px;top:484px;width:272px;height:23px;"></div><div class="btn" style="left:700px;top:386px;width:16px;height:18px;"></div><div style="left:704px;top:398px;width:1.6000000000000227px;height:1.6000000000000227px;background:#000"></div><div style="left:707px;top:398px;width:1.6000000000000227px;height:1.6000000000000227px;background:#000"></div><div style="left:710px;top:398px;width:1.6000000000000227px;height:1.6000000000000227px;background:#000"></div><div class="btn" style="left:700px;top:428px;width:16px;height:34px;"></div><div style="left:704px;top:456px;width:1.6000000000000227px;height:1.6000000000000227px;background:#000"></div><div style="left:707px;top:456px;width:1.6000000000000227px;height:1.6000000000000227px;background:#000"></div><div style="left:710px;top:456px;width:1.6000000000000227px;height:1.6000000000000227px;background:#000"></div><div class="btn" style="left:700px;top:486px;width:16px;height:19px;"></div><div style="left:704px;top:499px;width:1.6000000000000227px;height:1.6000000000000227px;background:#000"></div><div style="left:707px;top:499px;width:1.6000000000000227px;height:1.6000000000000227px;background:#000"></div><div style="left:710px;top:499px;width:1.6000000000000227px;height:1.6000000000000227px;background:#000"></div><span class="t" style="top:430px;font-size:12px;line-height:16px;color:#222;left:453.70px;letter-spacing:0.05px;"><span style="color:#1a1aff">Sum</span>({&lt;<span style="color:#8a1a1a">Quarter</span> = {1}&gt;}<span style="color:#8a1a1a">[Current Tax]</span>)</span><div style="left:105px;top:512px;width:78px;height:23px;background:#000"></div><div class="btn" style="left:106px;top:513px;width:76px;height:21px;"></div><span class="t" style="top:515px;font-size:12px;line-height:16px;color:#000;left:133.70px;transform-origin:0 0;transform:scaleX(0.8895);">Add</span><div class="btn" style="left:194px;top:512px;width:78px;height:23px;"></div><span class="t" style="top:515px;font-size:12px;line-height:16px;color:#808080;text-shadow:1px 1px 0 #fff;left:213.20px;transform-origin:0 0;transform:scaleX(0.8863);">Promote</span><div class="btn" style="left:282px;top:512px;width:78px;height:23px;"></div><span class="t" style="top:515px;font-size:12px;line-height:16px;color:#808080;text-shadow:1px 1px 0 #fff;left:306.00px;transform-origin:0 0;transform:scaleX(0.8963);">Group</span><div class="btn" style="left:105px;top:543px;width:78px;height:23px;"></div><span class="t" style="top:546px;font-size:12px;line-height:16px;color:#000;left:127.90px;transform-origin:0 0;transform:scaleX(0.8937);">Delete</span><div class="btn" style="left:194px;top:543px;width:78px;height:23px;"></div><span class="t" style="top:546px;font-size:12px;line-height:16px;color:#000;left:214.20px;transform-origin:0 0;transform:scaleX(0.8684);">Demote</span><div class="btn" style="left:282px;top:543px;width:78px;height:23px;"></div><span class="t" style="top:546px;font-size:12px;line-height:16px;color:#808080;text-shadow:1px 1px 0 #fff;left:300.20px;transform-origin:0 0;transform:scaleX(0.9103);">Ungroup</span><div class="grp" style="left:105px;top:578px;width:254px;height:81px;"></div><div style="left:111px;top:576px;width:69.5px;height:6px;background:#d4d0c8"></div><span class="t" style="top:572px;font-size:12px;line-height:16px;color:#000;left:113.50px;transform-origin:0 0;transform:scaleX(0.8953);">Accumulation</span><div class="rad" style="left:115px;top:593px;width:12px;height:12px;background:#fff"></div><div style="left:119px;top:597px;width:4px;height:4px;background:#000;border-radius:50%"></div><span class="t" style="top:592px;font-size:12px;line-height:16px;color:#000;left:131.60px;transform-origin:0 0;transform:scaleX(0.9006);">No Accumulation</span><div class="rad" style="left:115px;top:614px;width:12px;height:12px;background:#fff"></div><span class="t" style="top:613px;font-size:12px;line-height:16px;color:#000;left:131.60px;transform-origin:0 0;transform:scaleX(0.8847);">Full Accumulation</span><div class="rad" style="left:115px;top:635px;width:12px;height:12px;background:#fff"></div><span class="t" style="top:634px;font-size:12px;line-height:16px;color:#000;left:131.60px;transform-origin:0 0;transform:scaleX(0.8947);">Accumulate</span><div class="sunk" style="left:222px;top:632px;width:42px;height:23px;background:#d4d0c8"></div><span class="t" style="top:634px;font-size:12px;line-height:16px;color:#808080;text-shadow:1px 1px 0 #fff;left:224.90px;transform-origin:0 0;transform:scaleX(0.9432);">10</span><div class="sbtn" style="left:247px;top:634px;width:15px;height:9px;"></div><div class="sbtn" style="left:247px;top:644px;width:15px;height:9px;"></div><svg style="left:252px;top:637px" width="6" height="4" viewBox="0 0 6 4"><path d="M1.5 3.5h4L3.5 1.2z" fill="#fff"/><path d="M0.5 2.6h4L2.5 0.3z" fill="#808080"/></svg><svg style="left:252px;top:647px" width="6" height="4" viewBox="0 0 6 4"><path d="M1.5 1.2h4L3.5 3.6z" fill="#fff"/><path d="M0.5 0.3h4L2.5 2.6z" fill="#808080"/></svg><span class="t" style="top:634px;font-size:12px;line-height:16px;color:#000;left:269.50px;transform-origin:0 0;transform:scaleX(0.9060);">Steps Back</span><div class="grp" style="left:105px;top:669px;width:254px;height:78px;"></div><div style="left:111.2px;top:667px;width:54.10000000000001px;height:6px;background:#d4d0c8"></div><span class="t" style="top:663px;font-size:12px;line-height:16px;color:#000;left:113.70px;transform-origin:0 0;transform:scaleX(0.8832);">Trendlines</span><div class="sunk" style="left:114px;top:683px;width:128px;height:57px;"></div><div style="left:117px;top:688px;width:11px;height:11px;border:1px solid #808080;background:#fff"></div><span class="t" style="top:685px;font-size:12px;line-height:16px;color:#000;left:129.50px;transform-origin:0 0;transform:scaleX(0.9059);">Average</span><div style="left:117px;top:704px;width:11px;height:11px;border:1px solid #808080;background:#fff"></div><span class="t" style="top:701px;font-size:12px;line-height:16px;color:#000;left:129.50px;transform-origin:0 0;transform:scaleX(0.8873);">Linear</span><div style="left:117px;top:720px;width:11px;height:11px;border:1px solid #808080;background:#fff"></div><span class="t" style="top:717px;font-size:12px;line-height:16px;color:#000;clip-path:inset(0 24px 0 0);left:129.50px;transform-origin:0 0;transform:scaleX(0.8744);">Polynomial of 2nd degree</span><div style="left:117px;top:736px;width:11px;height:2px;border:1px solid #808080;border-bottom:none;background:#fff"></div><span class="t" style="top:733px;font-size:12px;line-height:16px;color:#000;clip-path:inset(0 23px 11px 0);left:129.50px;transform-origin:0 0;transform:scaleX(0.8844);">Polynomial of 3rd degree</span><div style="left:224px;top:685px;width:16px;height:53px;background:repeating-conic-gradient(#fff 0% 25%,#d4d0c8 0% 50%) 0 0/2px 2px"></div><div class="sbtn" style="left:224px;top:685px;width:16px;height:16px;"></div><div class="sbtn" style="left:224px;top:701px;width:16px;height:11px;"></div><div class="sbtn" style="left:224px;top:722px;width:16px;height:16px;"></div><svg style="left:228px;top:691px" width="8" height="5" viewBox="0 0 8 5"><path d="M0 4.6h8L4 .4z" fill="#000"/></svg><svg style="left:228px;top:728px" width="8" height="5" viewBox="0 0 8 5"><path d="M0 .4h8L4 4.6z" fill="#000"/></svg><div class="sunk" style="left:252px;top:684px;width:13px;height:13px;background:#d4d0c8"></div><span class="t" style="top:683px;font-size:12px;line-height:16px;color:#808080;text-shadow:1px 1px 0 #fff;left:269.90px;transform-origin:0 0;transform:scaleX(0.9092);">Show Equation</span><div class="sunk" style="left:252px;top:705px;width:13px;height:13px;background:#d4d0c8"></div><span class="t" style="top:704px;font-size:12px;line-height:16px;color:#808080;text-shadow:1px 1px 0 #fff;left:269.90px;transform-origin:0 0;transform:scaleX(0.9258);">Show R²</span><div class="sunk" style="left:377px;top:518px;width:13px;height:13px;background:#fff"></div><span class="t" style="top:517px;font-size:12px;line-height:16px;color:#000;left:395.00px;transform-origin:0 0;transform:scaleX(0.8972);">Relative</span><div class="sunk" style="left:377px;top:539px;width:13px;height:13px;background:#fff"></div><span class="t" style="top:538px;font-size:12px;line-height:16px;color:#000;left:395.00px;transform-origin:0 0;transform:scaleX(0.8695);">Invisible</span><div class="grp" style="left:368px;top:572px;width:184px;height:212px;"></div><div style="left:374.5px;top:570px;width:77.80000000000001px;height:6px;background:#d4d0c8"></div><span class="t" style="top:566px;font-size:12px;line-height:16px;color:#000;left:377.00px;transform-origin:0 0;transform:scaleX(0.8662);">Display Options</span><div class="sunk" style="left:377px;top:586px;width:13px;height:13px;background:#fff"></div><svg style="left:380px;top:589px" width="7" height="7" viewBox="0 0 7 7"><path d="M0.5 2.6L2.5 4.8L6.6 0.6" stroke="#000" stroke-width="1.9" fill="none"/></svg><span class="t" style="top:585px;font-size:12px;line-height:16px;color:#000;left:395.00px;transform-origin:0 0;transform:scaleX(0.8776);">Bar</span><div class="sunk" style="left:377px;top:612px;width:13px;height:13px;background:#d4d0c8"></div><span class="t" style="top:611px;font-size:12px;line-height:16px;color:#808080;text-shadow:1px 1px 0 #fff;left:395.00px;transform-origin:0 0;transform:scaleX(0.8747);">Symbol</span><div class="sunk" style="left:458px;top:606px;width:90px;height:24px;"></div><div class="sbtn" style="left:529px;top:608px;width:17px;height:20px;"></div><svg style="left:534px;top:616px" width="9" height="6" viewBox="0 0 9 6"><path d="M1 1h7L4.5 5z" fill="#fff"/><path d="M0 0h7L3.5 4z" fill="#808080"/></svg><span class="t" style="top:610px;font-size:12px;line-height:16px;color:#808080;left:462.80px;transform-origin:0 0;transform:scaleX(0.8749);">Auto</span><div class="sunk" style="left:377px;top:638px;width:13px;height:13px;background:#d4d0c8"></div><svg style="left:380px;top:641px" width="7" height="7" viewBox="0 0 7 7"><path d="M0.5 2.6L2.5 4.8L6.6 0.6" stroke="#808080" stroke-width="1.9" fill="none"/></svg><span class="t" style="top:637px;font-size:12px;line-height:16px;color:#808080;text-shadow:1px 1px 0 #fff;left:395.00px;transform-origin:0 0;transform:scaleX(0.9433);">Line</span><div class="sunk" style="left:458px;top:632px;width:90px;height:24px;"></div><div class="sbtn" style="left:529px;top:634px;width:17px;height:20px;"></div><svg style="left:534px;top:642px" width="9" height="6" viewBox="0 0 9 6"><path d="M1 1h7L4.5 5z" fill="#fff"/><path d="M0 0h7L3.5 4z" fill="#808080"/></svg><span class="t" style="top:636px;font-size:12px;line-height:16px;color:#808080;left:462.80px;transform-origin:0 0;transform:scaleX(0.8533);">Normal</span><div class="sunk" style="left:377px;top:664px;width:13px;height:13px;background:#d4d0c8"></div><span class="t" style="top:663px;font-size:12px;line-height:16px;color:#808080;text-shadow:1px 1px 0 #fff;left:395.00px;transform-origin:0 0;transform:scaleX(0.9595);">Stock</span><div class="sunk" style="left:377px;top:684px;width:13px;height:13px;background:#d4d0c8"></div><span class="t" style="top:683px;font-size:12px;line-height:16px;color:#808080;text-shadow:1px 1px 0 #fff;left:395.00px;transform-origin:0 0;transform:scaleX(0.8970);">Box Plot</span><div class="sunk" style="left:377px;top:703px;width:13px;height:13px;background:#fff"></div><span class="t" style="top:702px;font-size:12px;line-height:16px;color:#000;left:395.00px;transform-origin:0 0;transform:scaleX(0.8569);">Has Error Bars</span><div class="sunk" style="left:377px;top:723px;width:13px;height:13px;background:#fff"></div><svg style="left:380px;top:726px" width="7" height="7" viewBox="0 0 7 7"><path d="M0.5 2.6L2.5 4.8L6.6 0.6" stroke="#000" stroke-width="1.9" fill="none"/></svg><span class="t" style="top:722px;font-size:12px;line-height:16px;color:#000;left:395.00px;transform-origin:0 0;transform:scaleX(0.8883);">Values on Data Points</span><div class="sunk" style="left:377px;top:742px;width:13px;height:13px;background:#fff"></div><span class="t" style="top:741px;font-size:12px;line-height:16px;color:#000;left:395.00px;transform-origin:0 0;transform:scaleX(0.9042);">Text on Axis</span><div class="sunk" style="left:377px;top:762px;width:13px;height:13px;background:#fff"></div><span class="t" style="top:761px;font-size:12px;line-height:16px;color:#000;left:395.00px;transform-origin:0 0;transform:scaleX(0.8945);">Text as Pop-up</span><div class="grp" style="left:564px;top:572px;width:152px;height:105px;"></div><div style="left:570.5px;top:570px;width:58.700000000000045px;height:6px;background:#d4d0c8"></div><span class="t" style="top:566px;font-size:12px;line-height:16px;color:#000;left:573.00px;transform-origin:0 0;transform:scaleX(0.9148);">Total Mode</span><div class="rad" style="left:574px;top:586px;width:12px;height:12px;background:#d4d0c8"></div><span class="t" style="top:585px;font-size:12px;line-height:16px;color:#808080;text-shadow:1px 1px 0 #fff;left:590.80px;transform-origin:0 0;transform:scaleX(0.9415);">No Totals</span><div class="rad" style="left:574px;top:609px;width:12px;height:12px;background:#d4d0c8"></div><span class="t" style="top:608px;font-size:12px;line-height:16px;color:#808080;text-shadow:1px 1px 0 #fff;left:590.80px;transform-origin:0 0;transform:scaleX(0.9018);">Expression Total</span><div class="rad" style="left:574px;top:632px;width:12px;height:12px;background:#d4d0c8"></div><div style="left:578px;top:636px;width:4px;height:4px;background:#808080;border-radius:50%"></div><div class="sunk" style="left:591px;top:627px;width:111px;height:24px;"></div><div class="sbtn" style="left:683px;top:629px;width:17px;height:20px;"></div><svg style="left:688px;top:637px" width="9" height="6" viewBox="0 0 9 6"><path d="M1 1h7L4.5 5z" fill="#fff"/><path d="M0 0h7L3.5 4z" fill="#808080"/></svg><span class="t" style="top:631px;font-size:12px;line-height:16px;color:#808080;left:595.90px;transform-origin:0 0;transform:scaleX(0.8506);">Sum</span><span class="t" style="top:652px;font-size:12px;line-height:16px;color:#000;left:590.50px;transform-origin:0 0;transform:scaleX(0.9064);">of Rows</span><span class="t" style="top:693px;font-size:12px;line-height:16px;color:#000;left:563.80px;transform-origin:0 0;transform:scaleX(0.8767);">Bar Border Width</span><div class="sunk" style="left:564px;top:712px;width:134px;height:23px;"></div><span class="t" style="top:713px;font-size:12px;line-height:16px;color:#000;left:566.50px;transform-origin:0 0;transform:scaleX(0.8693);">0 pt</span><div class="sbtn" style="left:681px;top:714px;width:15px;height:9px;"></div><div class="sbtn" style="left:681px;top:724px;width:15px;height:9px;"></div><svg style="left:686px;top:717px" width="5" height="3" viewBox="0 0 5 3"><path d="M0.5 2.8h4L2.5 0.5z" fill="#000"/></svg><svg style="left:686px;top:727px" width="5" height="3" viewBox="0 0 5 3"><path d="M0.5 0.2h4L2.5 2.5z" fill="#000"/></svg><div class="sunk" style="left:564px;top:747px;width:13px;height:13px;background:#fff"></div><svg style="left:567px;top:750px" width="7" height="7" viewBox="0 0 7 7"><path d="M0.5 2.6L2.5 4.8L6.6 0.6" stroke="#000" stroke-width="1.9" fill="none"/></svg><span class="t" style="top:746px;font-size:12px;line-height:16px;color:#000;left:582.30px;transform-origin:0 0;transform:scaleX(0.8705);">Expressions as Legend</span><svg style="left:500px;top:724px" width="92" height="20" viewBox="500 724 92 20"><path d="M503.8 733.5Q503.8 731 506 731H511V730H521.5V729H532V728H541.5V727H547.6L549.8 729H587.6Q589.2 729 589.2 730.6V736.4Q589.2 738 587.6 738H549.8L547.6 740H541.5V739H532V738H521.5V737H511V736H506Q503.8 736 503.8 733.5Z" fill="#000"/><path d="M532 733.5h12.4M542.6 732.4l2 1.1-2 1.1z" stroke="#fff" stroke-width=".7" fill="#fff"/></svg><div class="btn" style="left:412px;top:801px;width:75px;height:29px;"></div><span class="t" style="top:804px;font-size:12px;line-height:16px;color:#000;left:441.10px;transform-origin:0 0;transform:scaleX(0.9283);">OK</span><div class="btn" style="left:493px;top:801px;width:75px;height:29px;"></div><span class="t" style="top:804px;font-size:12px;line-height:16px;color:#000;left:512.90px;transform-origin:0 0;transform:scaleX(0.9047);">Cancel</span><div class="btn" style="left:574px;top:801px;width:75px;height:29px;"></div><span class="t" style="top:804px;font-size:12px;line-height:16px;color:#808080;text-shadow:1px 1px 0 #fff;left:597.30px;transform-origin:0 0;transform:scaleX(0.9190);">Apply</span><div class="btn" style="left:655px;top:801px;width:75px;height:29px;"></div><span class="t" style="top:804px;font-size:12px;line-height:16px;color:#000;left:680.60px;transform-origin:0 0;transform:scaleX(0.8871);">Help</span></body></html>
